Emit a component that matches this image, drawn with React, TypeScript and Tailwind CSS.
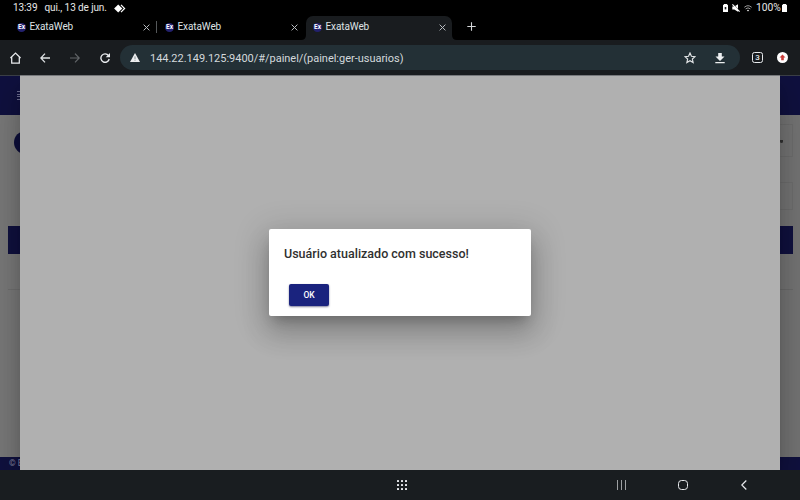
import React from "react";

const ExIcon = () => (
  <span className="flex h-[9px] w-[9px] shrink-0 items-center justify-center rounded-full bg-[#23216e] text-[6.5px] font-bold leading-none text-white">
    Ex
  </span>
);

const Close = () => (
  <svg className="h-[7px] w-[7px] shrink-0" viewBox="0 0 7 7" stroke="#b9bdc0" strokeWidth="1" fill="none">
    <path d="M.6.6l5.8 5.8M6.4.6L.6 6.4" />
  </svg>
);

const TabBody = () => (
  <>
    <ExIcon />
    <span className="ml-[3.5px] flex-1 text-[10px] leading-[12px] tracking-[-0.1px] text-[#dfe2e4]">ExataWeb</span>
    <Close />
  </>
);

function StatusBar() {
  return (
    <div className="flex h-4 items-center pl-[13px] pr-[13px] text-[10.5px] leading-none text-[#e8e8e8]">
      <span className="w-[31.5px] whitespace-nowrap text-[10px] tracking-[-0.1px]">13:39</span>
      <span className="w-[69px] whitespace-nowrap text-[10px] tracking-[-0.1px]">qui., 13 de jun.</span>
      <svg className="h-[9px] w-[12px]" viewBox="0 0 12 9">
        <path d="M4.2 .4l4.1 4.1-4.1 4.1L.1 4.5z" fill="#fff" />
        <path d="M7 .9l3.6 3.6L7 8.1" stroke="#fff" strokeWidth="1.2" fill="none" />
      </svg>
      <span className="flex-1" />
      <svg className="mr-[4px] h-[8px] w-[5px]" viewBox="0 0 5 8">
        <path d="M1 0h3v.8h1V8H0V.8h1z" fill="#fff" />
        <path d="M1.7 3h1.6v2.4H1.7z" fill="#222" />
      </svg>
      <svg className="mr-[4px] h-[8px] w-[8px]" viewBox="0 0 8 8">
        <path d="M.3 2.6h2L6 .2v7.6L2.3 5.4h-2z" fill="#fff" />
        <path d="M1.2.1l6.6 6.6" stroke="#000" strokeWidth=".6" />
        <path d="M.4.4l7.2 7.2" stroke="#fff" strokeWidth="1.2" />
      </svg>
      <svg className="mr-[4px] h-[7px] w-[8px]" viewBox="0 0 8 7" fill="none" stroke="#a9a9a9" strokeWidth=".9">
        <path d="M.3 2.3Q4-.9 7.7 2.3M1.6 3.9Q4 1.8 6.4 3.9" />
        <path d="M2.8 5.2Q4 4.2 5.2 5.2L4 6.5z" fill="#ddd" stroke="none" />
      </svg>
      <span className="w-[26px] whitespace-nowrap text-[10.3px]">100%</span>
      <svg className="h-[8px] w-[5px]" viewBox="0 0 5 8">
        <path d="M1 0h3v.8h1V8H0V.8h1z" fill="#fff" />
      </svg>
    </div>
  );
}

function Tabs() {
  return (
    <div className="flex h-6 items-stretch">
      <div className="flex w-[156px] items-center pb-[2px] pl-[17px] pr-[6px]">
        <TabBody />
      </div>
      <div className="mt-[5px] h-[12px] w-px bg-[#55585a]" />
      <div className="flex w-[149px] items-center pb-[2px] pl-[8px] pr-[8px]">
        <TabBody />
      </div>
      <div className="relative flex w-[146px] items-center rounded-t-[7px] bg-[#191c1f] pb-[2px] pl-[7px] pr-[6px]">
        <svg className="absolute -left-[5px] bottom-0 h-[5px] w-[5px]" viewBox="0 0 5 5">
          <path d="M5 0v5H0Q5 5 5 0" fill="#191c1f" />
        </svg>
        <TabBody />
        <svg className="absolute -right-[5px] bottom-0 h-[5px] w-[5px]" viewBox="0 0 5 5">
          <path d="M0 0v5h5Q0 5 0 0" fill="#191c1f" />
        </svg>
      </div>
      <svg className="ml-[15px] mt-[6px] h-[9px] w-[9px]" viewBox="0 0 9 9" stroke="#d5d8da" strokeWidth="1.1">
        <path d="M4.5.3v8.4M.3 4.5h8.4" />
      </svg>
    </div>
  );
}

function Toolbar() {
  return (
    <div className="flex h-[35px] items-center bg-[#191c1f] pl-[10px] pr-[12px]">
      <svg className="h-[12px] w-[11px]" viewBox="0 0 11 12" fill="none" stroke="#e8eaed" strokeWidth="1.25">
        <path d="M.4 6L5.5 1.1 10.6 6M1.7 5v6h7.6V5" />
      </svg>
      <svg className="ml-[19px] h-[10px] w-[10px]" viewBox="0 0 10 10" fill="none" stroke="#dfe2e4" strokeWidth="1.3">
        <path d="M10 5H1M5 .6L.8 5 5 9.4" />
      </svg>
      <svg className="ml-[20px] h-[10px] w-[10px]" viewBox="0 0 10 10" fill="none" stroke="#626568" strokeWidth="1.2">
        <path d="M0 5h9M5 .6L9.2 5 5 9.4" />
      </svg>
      <svg className="ml-[20px] h-[10px] w-[10px]" viewBox="0 0 10 10" fill="none" stroke="#e8eaed" strokeWidth="1.4">
        <path d="M8.5 2.6A4.2 4.2 0 1 0 9.2 6" />
        <path d="M10 0v4.3H5.7z" fill="#e8eaed" stroke="none" />
      </svg>
      <div className="ml-[10px] flex h-[25px] w-[620px] items-center rounded-full bg-[#233036] pl-[10px] pr-[15px]">
        <svg className="h-[9px] w-[10px]" viewBox="0 0 10 9">
          <path d="M5 0l5 9H0z" fill="#eceef0" />
          <path d="M5 3.4V6M5 6.7v1" stroke="#233036" strokeWidth=".5" />
        </svg>
        <span className="ml-[10px] mt-[1px] flex-1 whitespace-nowrap text-[11px] leading-none tracking-[-0.02px] text-[#d3d9dc]">
          144.22.149.125:9400/#/painel/(painel:ger-usuarios)
        </span>
        <svg className="h-[12px] w-[12px]" viewBox="0 0 12 12" fill="none" stroke="#e3e6e8" strokeWidth="1.15">
          <path d="M6 1l1.45 3.3 3.6.35-2.7 2.4.8 3.55L6 8.75 2.85 10.6l.8-3.55-2.7-2.4 3.6-.35z" />
        </svg>
        <svg className="ml-[19px] h-[12px] w-[10px]" viewBox="0 0 10 12" fill="#eceef0">
          <path d="M3.2 1h3.6v3.6H9.5L5 9 .5 4.6h2.7zM.3 10h9.4v1.3H.3z" />
        </svg>
      </div>
      <div className="ml-[12px] flex h-[11px] w-[11px] items-center justify-center rounded-[2.5px] border border-[#e8eaed] text-[8px] font-medium leading-none text-[#e8eaed]">
        3
      </div>
      <svg className="ml-auto h-[11px] w-[11px]" viewBox="0 0 11 11">
        <circle cx="5.5" cy="5.5" r="5.5" fill="#fff" />
        <path d="M5.5 2.6l3 3H6.8v2.6H4.2V5.6H2.5z" fill="#c93b38" />
      </svg>
    </div>
  );
}

function LeftEdge() {
  return (
    <div className="flex w-5 flex-col bg-[#7a7a7a]">
      <div className="flex h-10 items-center justify-end border-t border-[#3c4048] bg-[#10113f]">
        <div className="flex h-[9px] w-[3px] flex-col justify-between">
          <i className="h-px bg-[#6d6e91]" />
          <i className="h-px bg-[#6d6e91]" />
          <i className="h-px bg-[#6d6e91]" />
          <i className="h-px bg-[#6d6e91]" />
        </div>
      </div>
      <div className="ml-[14px] mt-[16px] h-[23px] w-[23px] rounded-full bg-[#0d0e3b]" />
      <div className="ml-[7.5px] mt-[72px] h-[28px] bg-[#10113f]" />
      <div className="ml-[7.5px] mt-[35px] h-px bg-[#707070]" />
      <div className="mt-auto flex h-[13px] items-center whitespace-nowrap bg-[#10113f] pl-[9px] text-[8.5px] leading-none text-[#8585a0]">
        © E
      </div>
    </div>
  );
}

function RightEdge() {
  return (
    <div className="flex w-5 flex-col bg-[#757575]">
      <div className="h-10 border-t border-[#3c4048] bg-[#10113f]" />
      <div className="mr-[7.5px] mt-[9px] flex h-[33px] items-start border-y border-r border-[#6e6e6e] pt-[15px]">
        <i className="h-[3px] w-[3px] rounded-b-full bg-[#333]" />
      </div>
      <div className="mr-[7.5px] mt-[25px] h-[28px] border-y border-r border-[#6e6e6e]" />
      <div className="mr-[7.5px] mt-[16px] h-[28px] bg-[#10113f]" />
      <div className="mr-[7.5px] mt-[35px] h-px bg-[#6b6b6b]" />
      <div className="mt-auto h-[13px] bg-[#10113f]" />
    </div>
  );
}

function Page() {
  return (
    <div className="flex h-[395px] overflow-hidden">
      <LeftEdge />
      <main className="z-10 flex flex-1 justify-center border-t border-[#77797c] bg-[#b0b0b0] pt-[153px] shadow-[0_11px_15px_-7px_rgba(0,0,0,0.2),0_24px_38px_3px_rgba(0,0,0,0.14),0_9px_30px_4px_rgba(0,0,0,0.12)]">
        <section className="flex h-[87px] w-[262px] flex-col items-start rounded-[2px] bg-white pl-[15px] pt-[16px] shadow-[0_8px_11px_-5px_rgba(0,0,0,0.22),0_17px_27px_2px_rgba(0,0,0,0.16),0_6px_32px_6px_rgba(0,0,0,0.14)]">
          <h1 className="whitespace-nowrap text-[12.5px] font-medium leading-[17px] text-[#303030]">
            Usuário atualizado com sucesso!
          </h1>
          <button className="ml-[5px] mt-[22px] h-[22px] w-[40px] rounded-[2px] bg-[#1a237e] text-[8.5px] font-medium leading-none text-white shadow-[0_1px_2px_rgba(0,0,60,0.5)]">
            OK
          </button>
        </section>
      </main>
      <RightEdge />
    </div>
  );
}

function NavBar() {
  return (
    <div className="flex h-[30px] items-center bg-[#191d20] pl-[397px] pr-[53px]">
      <div className="grid h-[10px] w-[10px] grid-cols-3 gap-[2px]">
        {Array.from({ length: 9 }, (_, i) => (
          <i key={i} className="h-[2px] w-[2px] rounded-[0.5px] bg-[#e8eaed]" />
        ))}
      </div>
      <svg className="ml-[210px] h-[10px] w-[9px]" viewBox="0 0 9 10" stroke="#9da0a2" strokeWidth="1">
        <path d="M.5 0v10M4.5 0v10M8.5 0v10" />
      </svg>
      <div className="ml-[52px] h-[10px] w-[10px] rounded-[3.5px] border-[1.2px] border-[#e8eaed]" />
      <svg className="ml-auto h-[10px] w-[6px]" viewBox="0 0 6 10" fill="none" stroke="#e8eaed" strokeWidth="1.2">
        <path d="M5.3.5L.8 5l4.5 4.5" />
      </svg>
    </div>
  );
}

export default function App() {
  return (
    <div className="h-[500px] w-[800px] overflow-hidden bg-black font-['Roboto',sans-serif]">
      <StatusBar />
      <Tabs />
      <Toolbar />
      <Page />
      <NavBar />
    </div>
  );
}
